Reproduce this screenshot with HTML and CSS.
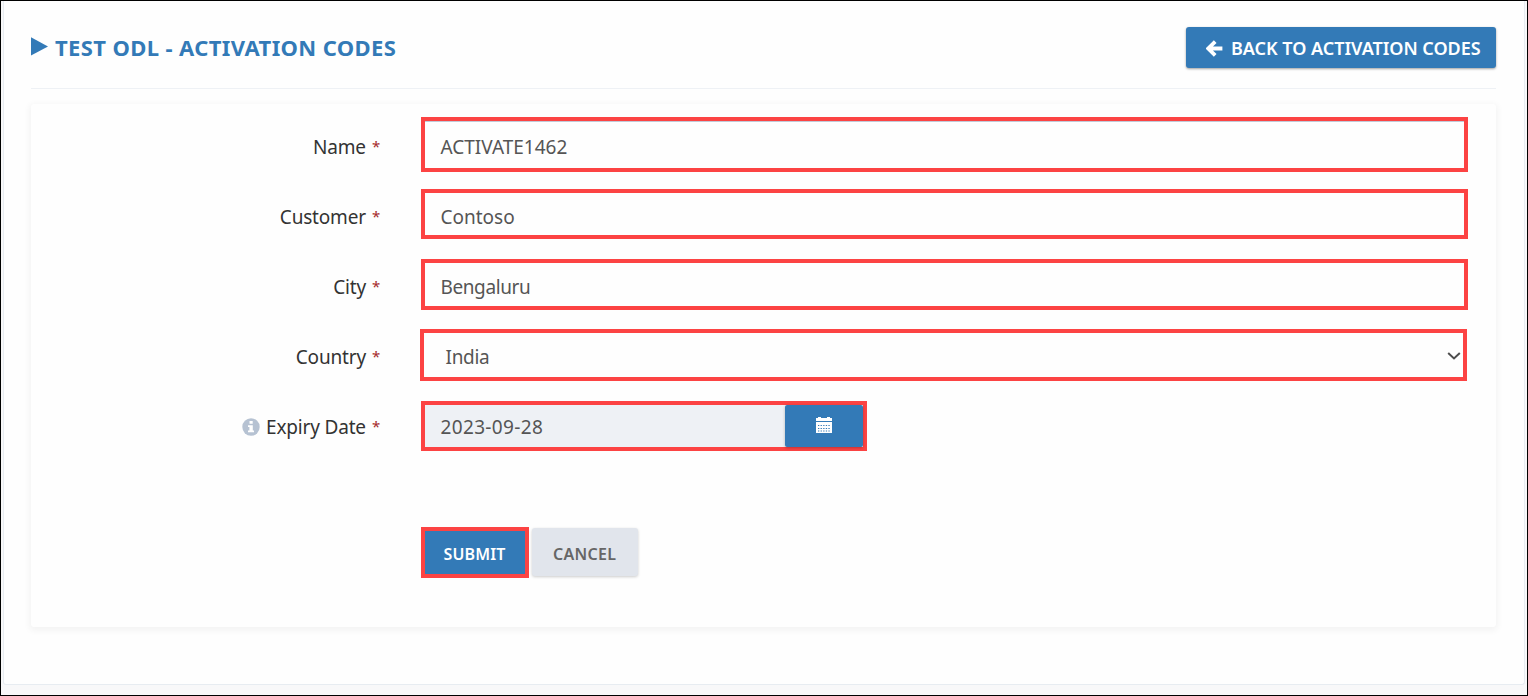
FILE: index.html
```html
<!DOCTYPE html>
<html lang="en">
<head>
<meta charset="utf-8">
<title>Test ODL - Activation Codes</title>
<link rel="stylesheet" href="styles.css">
</head>
<body>
<div class="portlet">
  <header class="header">
    <h1 class="title">
      <svg class="title-icon" viewBox="0 0 17 19"><path d="M0 0.3L17 9.5L0 18.5Z"/></svg>
      <span class="title-text">TEST ODL - ACTIVATION CODES</span>
    </h1>
    <a class="btn back">
      <svg class="back-icon" viewBox="0 0 17 17"><path d="M9.2 1.6L2.3 8.5L9.2 15.4M3.4 8.5H16.4" fill="none" stroke="#fff" stroke-width="3.8"/></svg>
      <span class="back-text">BACK TO ACTIVATION CODES</span>
    </a>
  </header>
  <main class="card">
    <div class="row">
      <label class="label"><span>Name</span><i class="req">*</i></label>
      <div class="field name"><span>ACTIVATE1462</span></div>
    </div>
    <div class="row">
      <label class="label"><span>Customer</span><i class="req">*</i></label>
      <div class="field customer"><span>Contoso</span></div>
    </div>
    <div class="row">
      <label class="label"><span>City</span><i class="req">*</i></label>
      <div class="field city"><span class="v-city">Bengaluru</span></div>
    </div>
    <div class="row">
      <label class="label"><span>Country</span><i class="req">*</i></label>
      <div class="field country"><span class="v-country">India</span>
        <svg class="chevron" viewBox="0 0 14 8"><path d="M1.2 1L7 6.4L12.8 1" fill="none" stroke="#4d4d4d" stroke-width="2"/></svg>
      </div>
    </div>
    <div class="row">
      <label class="label">
        <svg class="info" viewBox="0 0 18 18"><circle cx="9" cy="9" r="8.7" fill="#b6c2d2"/><path d="M7.5 3h3.2v2.8H7.5zM6 7.2h4.8v5.2H12V14.3H6V12.4H7.4V9H6z" fill="#fff"/></svg>
        <span>Expiry Date</span><i class="req">*</i>
      </label>
      <div class="field date">
        <span class="date-value">2023-09-28</span>
        <span class="date-btn">
          <svg class="calendar" viewBox="0 0 16 16"><path d="M0 1H2V0H5V1H11V0H14V1H16V4H0zM0 5H16V16H0z" fill="#fff"/><path d="M2 8.5H15M2 11.5H15M2 14H15" stroke="#347ab7" stroke-width="1.2" stroke-dasharray="1.3 1.3"/></svg>
        </span>
      </div>
    </div>
    <div class="actions">
      <a class="submit">SUBMIT</a>
      <a class="cancel">CANCEL</a>
    </div>
  </main>
</div>
</body>
</html>
```
FILE: styles.css
```css
* { box-sizing: border-box; }
body {
  margin: 0;
  height: 696px;
  padding: 0 2px;
  border: 1px solid #000;
  background: #f8f8f9;
  overflow: hidden;
  font-family: "Noto Sans", "Open Sans", sans-serif;
  font-size: 19px;
  color: #333;
}
.portlet {
  height: 684px;
  padding: 26px 28px 0 27px;
  border: 1px solid #e7ecf1;
  border-top: 0;
  border-radius: 0 0 3px 3px;
  background: #fefefe;
}
.header {
  display: flex;
  justify-content: space-between;
  height: 62px;
  border-bottom: 1px solid #eef1f5;
}
.title {
  display: flex;
  gap: 7px;
  margin: 0;
  font-size: 22px;
  font-weight: 700;
  line-height: 40px;
  letter-spacing: .38px;
  color: #337ab7;
  white-space: nowrap;
}
.title-icon { width: 17px; height: 19px; margin-top: 10px; fill: #337ab7; }
.btn {
  display: flex;
  background: #337ab7;
  color: #fff;
  border-radius: 3px;
  box-shadow: 0 1px 3px rgba(0,0,0,.2), 0 1px 2px rgba(0,0,0,.2);
}
.back {
  width: 310px;
  height: 41px;
  padding-left: 20px;
  gap: 8px;
  font-size: 18px;
  font-weight: 600;
  line-height: 43px;
  white-space: nowrap;
}
.back-text { letter-spacing: -.02px; }
.back-icon { width: 17px; height: 17px; margin-top: 13px; }
.card {
  height: 523px;
  margin-top: 15px;
  padding: 8px 27px 0 0;
  border-radius: 3px;
  background: #fefefe;
  box-shadow: 0 2px 6px 2px rgba(0,0,0,.045);
}
.row { display: flex; height: 70px; }
.label {
  display: flex;
  justify-content: flex-end;
  width: 349px;
  margin-right: 41px;
  line-height: 70px;
  letter-spacing: -.18px;
  white-space: nowrap;
}
.req { margin: -1px 0 0 6px; font-size: 15px; font-style: normal; color: #a52a2a; }
.info { width: 18px; height: 18px; margin: 26px 6px 0 0; }
.field {
  flex: none;
  width: 1047px;
  border: 4px solid #fc4343;
  padding-left: 15.5px;
  color: #555;
}
.name { height: 55px; margin-top: 5px; line-height: 52px; box-shadow: inset 0 1px 0 #c2cad8; }
.customer { height: 50px; margin-top: 7px; line-height: 48px; }
.city { height: 51px; margin-top: 7px; line-height: 48px; }
.v-city { letter-spacing: -.4px; }
.country {
  display: flex;
  justify-content: space-between;
  height: 52px;
  margin: 7px 0 0 -1px;
  padding: 0 2px 0 21.5px;
  line-height: 48px;
}
.v-country { letter-spacing: -.3px; }
.chevron { width: 14px; height: 8px; margin-top: 19px; }
.date { display: flex; width: 446px; height: 50px; margin-top: 9px; padding: 0; line-height: 44px; }
.date-value { width: 360px; padding-left: 15.5px; background: #eef1f5; letter-spacing: .35px; }
.date-btn {
  display: flex;
  width: 78px;
  justify-content: center;
  border-radius: 2px;
  background: #337ab7;
  box-shadow: 0 1px 3px rgba(0,0,0,.25);
}
.calendar { width: 16px; height: 16px; margin-top: 12px; }
.actions { display: flex; gap: 2.5px; margin: 65px 0 0 390px; font-size: 16px; font-weight: 600; }
.submit {
  width: 108px;
  height: 51px;
  padding-left: 18.5px;
  border: 4px solid #fc4343;
  background: #337ab7;
  color: #fff;
  line-height: 46px;
  letter-spacing: .15px;
}
.cancel {
  width: 106px;
  height: 48px;
  margin-top: 1px;
  padding-left: 21.5px;
  border-radius: 3px;
  background: #e1e5ec;
  box-shadow: 0 1px 3px rgba(0,0,0,.2);
  color: #666;
  line-height: 52px;
  letter-spacing: .3px;
}
```
